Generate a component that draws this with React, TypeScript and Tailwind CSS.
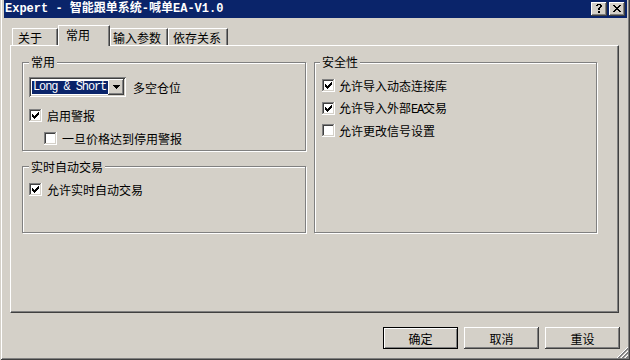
import React from 'react';

// classic 3d bevels
const raised = 'shadow-[inset_-1px_-1px_0_#404040,inset_1px_1px_0_#fff,inset_-2px_-2px_0_#808080]';

function CheckBox({ checked }: { checked?: boolean }) {
  // win9x check: every column is 3px tall, offsets below
  const tops = [2, 3, 4, 3, 2, 1, 0];
  return (
    <svg width="13" height="13" viewBox="0 0 13 13" shapeRendering="crispEdges" className="shrink-0">
      <rect x="0" y="0" width="13" height="13" fill="#fff" />
      <rect x="0" y="0" width="12" height="1" fill="#808080" />
      <rect x="0" y="0" width="1" height="12" fill="#808080" />
      <rect x="1" y="1" width="10" height="1" fill="#404040" />
      <rect x="1" y="1" width="1" height="10" fill="#404040" />
      <rect x="1" y="11" width="11" height="1" fill="#d4d0c8" />
      <rect x="11" y="1" width="1" height="11" fill="#d4d0c8" />
      {checked && tops.map((t, i) => <rect key={i} x={3 + i} y={3 + t} width="1" height="3" fill="#000" />)}
    </svg>
  );
}

function CloseGlyph() {
  const rows = [
    [0, 1, 6, 7],
    [1, 2, 5, 6],
    [2, 3, 4, 5],
    [3, 4],
    [2, 3, 4, 5],
    [1, 2, 5, 6],
    [0, 1, 6, 7],
  ];
  return (
    <svg width="8" height="7" viewBox="0 0 8 7" shapeRendering="crispEdges">
      {rows.map((r, y) => r.map((x) => <rect key={`${x}-${y}`} x={x} y={y} width="1" height="1" fill="#000" />))}
    </svg>
  );
}

function HelpGlyph() {
  const rows = [
    [1, 2, 3, 4],
    [0, 1, 4, 5],
    [4, 5],
    [3, 4],
    [2, 3],
    [2, 3],
    [],
    [2, 3],
    [2, 3],
  ];
  return (
    <svg width="6" height="9" viewBox="0 0 6 9" shapeRendering="crispEdges">
      {rows.map((r, y) => r.map((x) => <rect key={`${x}-${y}`} x={x} y={y} width="1" height="1" fill="#000" />))}
    </svg>
  );
}

function DownArrow() {
  return (
    <svg width="7" height="4" viewBox="0 0 7 4" shapeRendering="crispEdges">
      <rect x="0" y="0" width="7" height="1" fill="#000" />
      <rect x="1" y="1" width="5" height="1" fill="#000" />
      <rect x="2" y="2" width="3" height="1" fill="#000" />
      <rect x="3" y="3" width="1" height="1" fill="#000" />
    </svg>
  );
}

function SizeGrip() {
  const px: { x: number; y: number; c: string }[] = [];
  for (let y = 0; y < 12; y++) {
    for (let x = 0; x < 12; x++) {
      const d = x + y - 11;
      if (d < 0) continue;
      const m = d % 4;
      if (m === 1) px.push({ x, y, c: '#fff' });
      else if (m === 2 || m === 3) px.push({ x, y, c: '#808080' });
    }
  }
  return (
    <svg width="12" height="12" viewBox="0 0 12 12" shapeRendering="crispEdges" className="absolute right-[2px] bottom-[2px]">
      {px.map((p) => <rect key={`${p.x}-${p.y}`} x={p.x} y={p.y} width="1" height="1" fill={p.c} />)}
    </svg>
  );
}

function Group({ title, className, titleClass, children }: { title: string; className: string; titleClass: string; children?: React.ReactNode }) {
  return (
    <div className={`flex flex-col border border-[#808080] shadow-[inset_1px_1px_0_#fff,1px_1px_0_#fff] ${className}`}>
      <span className={`self-start px-[2px] bg-[#d4d0c8] leading-[13px] ${titleClass}`}>{title}</span>
      {children}
    </div>
  );
}

function Check({ label, checked, className = '', gap = 'gap-[5px]' }: { label: React.ReactNode; checked?: boolean; className?: string; gap?: string }) {
  return (
    <div className={`flex items-center h-[13px] ${gap} ${className}`}>
      <CheckBox checked={checked} />
      <span className="leading-[13px] whitespace-nowrap">{label}</span>
    </div>
  );
}

function Tab({ label, width, pad, selected }: { label: string; width: string; pad: string; selected?: boolean }) {
  if (selected) {
    return (
      <div className={`relative z-10 -mb-px h-[21px] ${width} ${pad} pt-[2px] bg-[#d4d0c8] border-l border-t border-white border-r border-r-[#404040] shadow-[inset_-1px_0_0_#808080] leading-[13px]`}>
        {label}
      </div>
    );
  }
  return (
    <div className={`h-[17px] ${width} ${pad} pt-[2px] border-l border-t border-white border-r border-r-[#404040] shadow-[inset_-1px_0_0_#808080] leading-[13px]`}>
      {label}
    </div>
  );
}

function DlgButton({ label, isDefault }: { label: string; isDefault?: boolean }) {
  return (
    <div
      className={`w-[75px] h-[22px] flex items-center justify-center leading-[13px] ${
        isDefault ? 'border border-black shadow-[inset_1px_1px_0_#fff,inset_-1px_-1px_0_#808080]' : raised
      }`}
    >
      {label}
    </div>
  );
}

export default function App() {
  return (
    <div className="relative w-[630px] h-[360px] overflow-hidden flex flex-col bg-[#d4d0c8] text-black text-[12px] font-['Noto_Sans_CJK_SC',sans-serif] shadow-[inset_1px_0_0_#d4d0c8,inset_-1px_-1px_0_#404040,inset_2px_0_0_#fff,inset_-2px_-2px_0_#808080]">
      {/* caption */}
      <div className="ml-[4px] mr-[3px] h-[18px] shrink-0 flex items-center pl-[1px] pr-[2px] bg-[#0a246a]">
        <span className="flex-1 whitespace-pre text-white font-bold text-[12px] leading-[18px] font-['Liberation_Mono','Noto_Sans_CJK_SC',monospace]">
          Expert - 智能跟单系统-喊单EA-V1.0
        </span>
        <div className="flex gap-[2px]">
          <div className={`w-[16px] h-[14px] flex items-center justify-center pr-[1px] pb-[1px] bg-[#d4d0c8] ${raised}`}>
            <HelpGlyph />
          </div>
          <div className={`w-[16px] h-[14px] flex items-center justify-center pr-[1px] pb-[1px] bg-[#d4d0c8] ${raised}`}>
            <CloseGlyph />
          </div>
        </div>
      </div>

      <div className="flex flex-col pl-[10px] pt-[7px]">
        {/* tabs */}
        <div className="flex items-end h-[20px] pl-[2px]">
          <Tab label="关于" width="w-[46px]" pad="pl-[5px]" />
          <Tab label="常用" width="w-[52px]" pad="pl-[7px]" selected />
          <Tab label="输入参数" width="w-[58px]" pad="pl-[2px]" />
          <Tab label="依存关系" width="w-[60px]" pad="pl-[4px]" />
        </div>

        {/* sheet */}
        <div className="w-[609px] h-[268px] flex gap-[8px] pl-[11px] pt-[16px] border border-white border-r-[#404040] border-b-[#404040] shadow-[inset_-1px_-1px_0_#808080]">
          <div className="flex flex-col gap-[15px]">
            <Group title="常用" className="w-[284px] h-[89px] pl-[6px]" titleClass="-mt-[8px]">
              <div className="flex items-center gap-[7px] mt-[9px]">
                <div className="w-[97px] h-[20px] flex items-center p-[2px] bg-white shadow-[inset_1px_1px_0_#808080,inset_-1px_-1px_0_#fff,inset_2px_2px_0_#404040,inset_-2px_-2px_0_#d4d0c8]">
                  <div className="flex-1 h-full flex items-center pl-[1px]">
                    <div className="flex-1 h-[13px] flex items-center pl-[1px] bg-[#0a246a] text-white text-[12px] tracking-[-1.1px] leading-[13px] font-['Liberation_Mono',monospace] whitespace-pre">
                      Long &amp; Short
                    </div>
                  </div>
                  <div className={`w-[16px] h-[16px] flex items-center justify-center bg-[#d4d0c8] ${raised}`}>
                    <DownArrow />
                  </div>
                </div>
                <span className="leading-[13px]">多空仓位</span>
              </div>
              <Check label="启用警报" checked className="mt-[12px]" />
              <Check label="一旦价格达到停用警报" className="mt-[10px] ml-[15px]" />
            </Group>

            <Group title="实时自动交易" className="w-[284px] h-[67px] pl-[6px]" titleClass="-mt-[7px]">
              <Check label="允许实时自动交易" checked className="mt-[10px]" />
            </Group>
          </div>

          <Group title="安全性" className="w-[283px] h-[171px] pl-[7px]" titleClass="-mt-[8px] -ml-[2px]">
            <Check label="允许导入动态连接库" checked gap="gap-[4px]" className="mt-[11px]" />
            <Check
              label={
                <>
                  允许导入外部<span className="font-['Liberation_Mono',monospace] text-[12px] tracking-[-1.2px]">EA</span>交易
                </>
              }
              checked
              gap="gap-[4px]"
              className="mt-[10px]"
            />
            <Check label="允许更改信号设置" gap="gap-[4px]" className="mt-[9px]" />
          </Group>
        </div>

        {/* buttons */}
        <div className="w-[610px] flex justify-end gap-[6px] mt-[14px]">
          <DlgButton label="确定" isDefault />
          <DlgButton label="取消" />
          <DlgButton label="重设" />
        </div>
      </div>

      <SizeGrip />
    </div>
  );
}
